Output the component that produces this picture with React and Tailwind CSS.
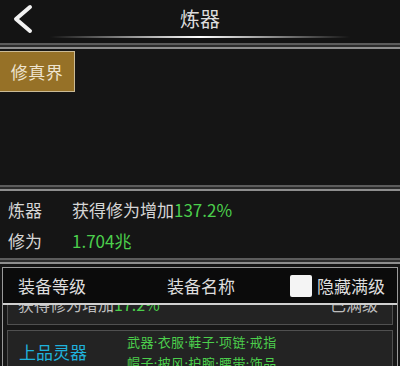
import React from "react";

const Band = () => (
  <div className="h-[6px] bg-[#2c2c2c] border-t-2 border-b-2 border-t-[#5c5c5c] border-b-[#8e8e8e]" />
);

const green = "text-[#4ccf4c]";

export default function App() {
  return (
    <div
      className="w-[400px] h-[366px] overflow-hidden bg-[#151515] flex flex-col"
      style={{ fontFamily: '"Noto Sans CJK SC", "Noto Sans", sans-serif' }}
    >
      {/* header */}
      <div className="relative h-[43px] shrink-0 bg-[#141414] flex items-center justify-center">
        <svg className="absolute left-[10px] top-[4px]" width="24" height="30" viewBox="0 0 24 30">
          <path d="M20 3 L6 15 L20 27" fill="none" stroke="#f2f2f2" strokeWidth="4" strokeLinecap="round" strokeLinejoin="round" />
        </svg>
        <span className="text-[20px] leading-none text-[#dcdcdc] -mt-[6px]">炼器</span>
        <div className="absolute left-[50px] right-[50px] bottom-[5px] h-[2px] bg-gradient-to-r from-transparent via-white to-transparent" />
      </div>
      <Band />

      {/* realm */}
      <div className="h-[136px] shrink-0 bg-[#151515]">
        <div className="w-[75px] h-[41px] mt-[2px] bg-[#967127] border border-[#cbbb96] border-l-0 flex items-center justify-center">
          <span className="text-[17px] text-[#eee4cf] tracking-[0.5px]">修真界</span>
        </div>
      </div>
      <Band />

      {/* info */}
      <div className="h-[67px] shrink-0 bg-[#151515] flex flex-col justify-center gap-[12px] pl-[8px] text-[17px] leading-[19px] text-[#d6d6d6]">
        <div className="flex">
          <span className="w-[64px]">炼器</span>
          <span>
            获得修为增加<span className={green}>137.2%</span>
          </span>
        </div>
        <div className="flex">
          <span className="w-[64px]">修为</span>
          <span className={green}>1.704兆</span>
        </div>
      </div>
      <Band />

      {/* table */}
      <div className="flex-1 mx-[2px] mt-[3px] border-l border-r border-t border-[#9a9a9a] bg-[#171717] flex flex-col overflow-hidden">
        <div className="h-[37px] shrink-0 bg-[#0b0b0b] flex items-center text-[17px] text-[#dedede] border-b-2 border-[#d0d0d0]">
          <span className="ml-[15px] w-[149px]">装备等级</span>
          <span className="w-[123px]">装备名称</span>
          <span className="w-[22px] h-[22px] bg-[#f4f4f4] rounded-[2px] mr-[5px]" />
          <span>隐藏满级</span>
        </div>
        <div className="flex-1 overflow-hidden px-[4px]">
          <div className="h-[20px] bg-[#232323] border border-t-0 border-[#505050] overflow-hidden relative">
            <div className="absolute left-[10px] right-[14px] -top-[11px] flex justify-between text-[16px] leading-[20px] text-[#bdbdbd]">
              <span>
                获得修为增加<span className={green}>17.2%</span>
              </span>
              <span>已满级</span>
            </div>
          </div>
          <div className="mt-[5px] h-[60px] bg-[#232323] border border-[#505050] flex items-start">
            <span className="ml-[11px] mt-[10px] w-[108px] text-[17px] leading-[22px] text-[#1fb2dc]">上品灵器</span>
            <div
              className="flex flex-col mt-[1px] text-[13px] leading-[21px] tracking-[0.4px] text-[#4ccf4c]"
              style={{ fontFamily: '"Noto Sans", "Noto Sans CJK SC", sans-serif' }}
            >
              <span>武器·衣服·鞋子·项链·戒指</span>
              <span>帽子·披风·护腕·腰带·饰品</span>
            </div>
          </div>
        </div>
      </div>
    </div>
  );
}
